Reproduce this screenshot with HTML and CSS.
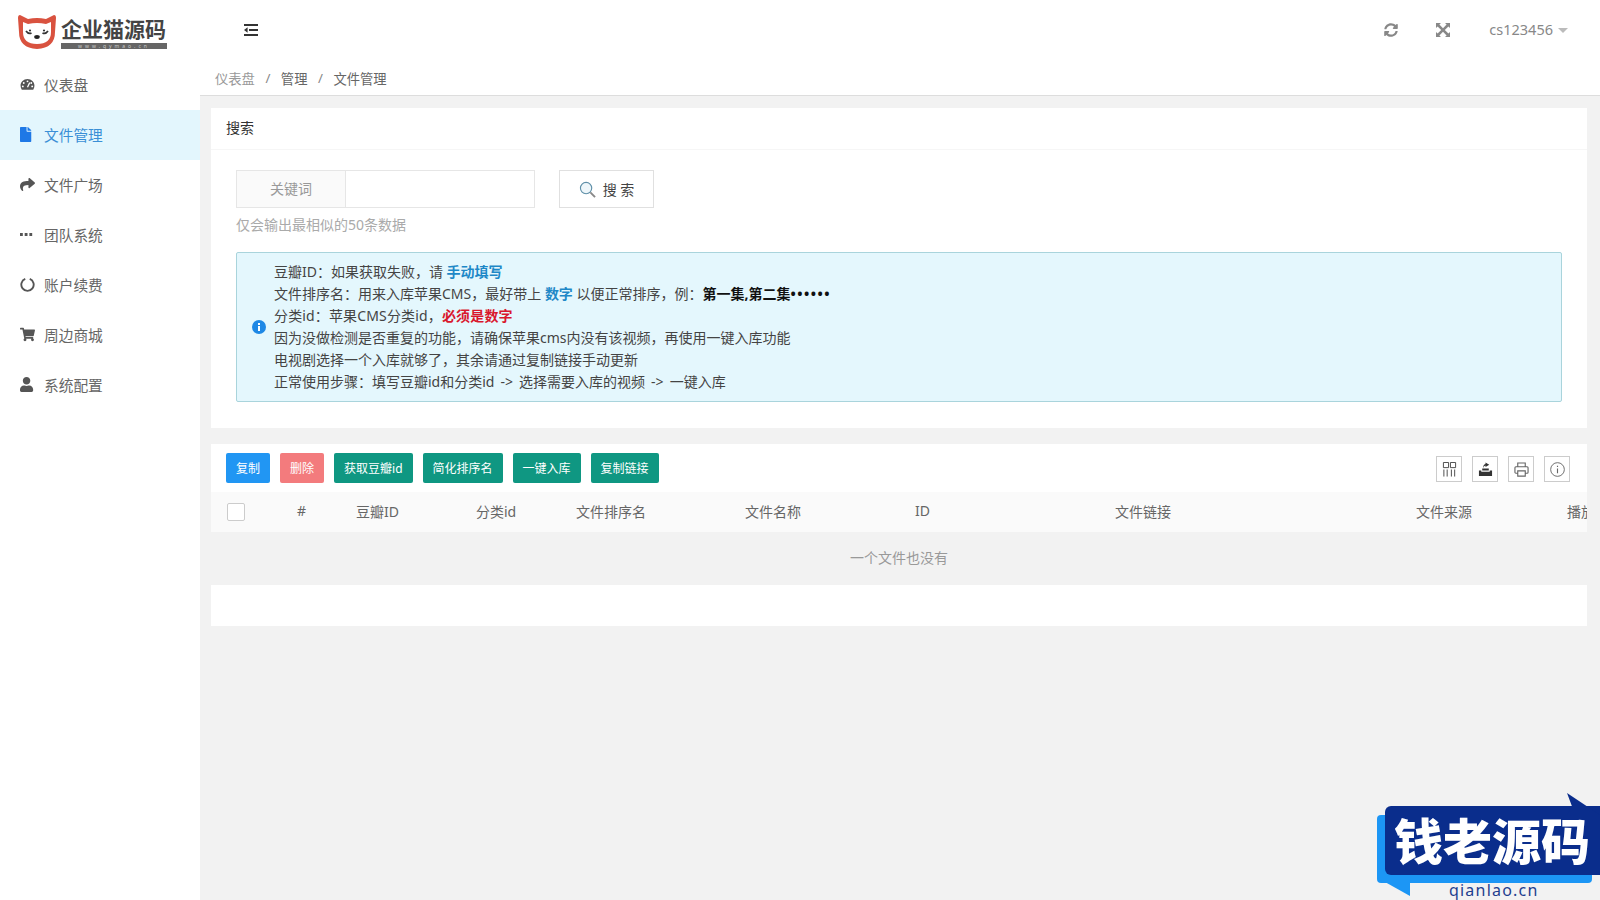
FILE: index.html
```html
<!DOCTYPE html>
<html lang="zh-CN">
<head>
    <meta charset="UTF-8">
    <title>文件管理</title>
    <link rel="stylesheet" href="styles.css">
</head>
<body>
<div class="side">
    <div class="logo">
        <svg class="logo-cat" viewBox="0 0 38 34">
            <path fill="#d9523f" d="M2 0 L10 4 Q19 2 28 4 L36 0 Q38 0 38 3 L37 17 Q37 33 19 34 Q1 33 1 17 L0 3 Q0 0 2 0Z"/>
            <path fill="#fff" d="M5 7 L10 9 Q19 7 28 9 L33 7 L33 17 Q33 29 19 29 Q5 29 5 17Z"/>
            <path fill="none" stroke="#333" stroke-width="1.7" d="M8 16 q2.5 3.5 5.5 2 M24.5 18 q3 1.5 5.5 -2"/>
            <circle cx="12" cy="15.5" r="1.1" fill="#333"/>
            <circle cx="26" cy="15.5" r="1.1" fill="#333"/>
            <ellipse cx="19" cy="22" rx="2.8" ry="1.9" fill="#222"/>
        </svg>
        <div class="logo-text">
            <div class="logo-name">企业猫源码</div>
            <div class="logo-sub">www.qymao.cn</div>
        </div>
    </div>
    <div class="menu">
        <div class="menu-item">
            <svg class="ico" viewBox="0 0 16 16"><path fill="#555" d="M8 2.2C3.8 2.2.6 5.4.6 9.3c0 1.6.5 3 1.3 4.2h12.2c.8-1.2 1.3-2.6 1.3-4.2 0-3.9-3.2-7.1-7.4-7.1z"/><circle cx="8" cy="4.6" r="1" fill="#fff"/><circle cx="4" cy="6.4" r="1" fill="#fff"/><circle cx="12" cy="6.4" r="1" fill="#fff"/><circle cx="3" cy="10" r="1" fill="#fff"/><circle cx="13" cy="10" r="1" fill="#fff"/><path stroke="#fff" stroke-width="1.4" d="M8 11 L10.4 6"/></svg>
            <span>仪表盘</span>
        </div>
        <div class="menu-item menu-active">
            <svg class="ico" viewBox="0 0 384 512" preserveAspectRatio="xMinYMid"><path fill="#1e78e6" d="M224 136V0H24C10.7 0 0 10.7 0 24v464c0 13.3 10.7 24 24 24h336c13.3 0 24-10.7 24-24V160H248c-13.2 0-24-10.8-24-24zm160-14.1v6.1H256V0h6.1c6.4 0 12.5 2.5 17 7l97.9 98c4.5 4.5 7 10.6 7 16.9z"/></svg>
            <span>文件管理</span>
        </div>
        <div class="menu-item">
            <svg class="ico" viewBox="0 0 512 512"><path fill="#555" d="M503.691 189.836L327.687 37.851C312.281 24.546 288 35.347 288 56.015v80.053C127.371 137.907 0 170.1 0 322.326c0 61.441 39.581 122.309 83.333 154.132 13.653 9.931 33.111-2.533 28.077-18.631C66.066 312.814 132.917 274.316 288 272.085V360c0 20.7 24.3 31.453 39.687 18.164l176.004-152c11.071-9.562 11.086-26.753 0-36.328z"/></svg>
            <span>文件广场</span>
        </div>
        <div class="menu-item">
            <svg class="ico" viewBox="0 0 16 16"><path fill="#555" d="M0 6.5h3v3H0zM5 6.5h3v3H5zM10 6.5h3v3h-3z"/></svg>
            <span>团队系统</span>
        </div>
        <div class="menu-item">
            <svg class="ico" viewBox="0 0 16 16"><path fill="none" stroke="#555" stroke-width="2" d="M5.6 2a6.6 6.6 0 1 0 4.8 0"/></svg>
            <span>账户续费</span>
        </div>
        <div class="menu-item">
            <svg class="ico" viewBox="0 0 576 512" preserveAspectRatio="xMinYMid"><path fill="#555" d="M528.12 301.319l47.273-208C578.806 78.301 567.391 64 551.99 64H159.208l-9.166-44.81C147.758 8.021 137.93 0 126.529 0H24C10.745 0 0 10.745 0 24v16c0 13.255 10.745 24 24 24h69.883l70.248 343.435C147.325 417.1 136 435.222 136 456c0 30.928 25.072 56 56 56s56-25.072 56-56c0-15.674-6.447-29.835-16.824-40h209.647C430.447 426.165 424 440.326 424 456c0 30.928 25.072 56 56 56s56-25.072 56-56c0-22.172-12.888-41.332-31.579-50.405l5.517-24.276c3.413-15.018-8.002-29.319-23.403-29.319H218.117l-6.545-32h293.145c11.206 0 20.92-7.754 23.403-18.681z"/></svg>
            <span>周边商城</span>
        </div>
        <div class="menu-item">
            <svg class="ico" viewBox="0 0 448 512" preserveAspectRatio="xMinYMid"><path fill="#555" d="M224 256c70.7 0 128-57.3 128-128S294.7 0 224 0 96 57.3 96 128s57.3 128 128 128zm89.6 32h-16.7c-22.2 10.2-46.9 16-72.9 16s-50.6-5.8-72.9-16h-16.7C60.2 288 0 348.2 0 422.4V464c0 26.5 21.5 48 48 48h352c26.5 0 48-21.5 48-48v-41.6c0-74.2-60.2-134.4-134.4-134.4z"/></svg>
            <span>系统配置</span>
        </div>
    </div>
</div>

<div class="main">
    <div class="top">
        <svg class="toggle" viewBox="0 0 14 12"><path fill="#333" d="M0 0h14v2H0zM5 5h9v2H5zM0 10h14v2H0zM3.6 3.2v5.6L0 6z"/></svg>
        <div class="top-right">
            <svg class="top-ico" viewBox="0 0 512 512"><path fill="#888" d="M370.72 133.28C339.458 104.008 298.888 87.962 255.848 88c-77.458.068-144.328 53.178-162.791 126.85-1.344 5.363-6.122 9.15-11.651 9.15H24.103c-7.498 0-13.194-6.807-11.807-14.176C33.933 94.924 134.813 8 256 8c66.448 0 126.791 26.136 171.315 68.685L463.03 40.97C478.149 25.851 504 36.559 504 57.941V192c0 13.255-10.745 24-24 24H345.941c-21.382 0-32.09-25.851-16.971-40.971l41.75-41.749zM32 296h134.059c21.382 0 32.09 25.851 16.971 40.971l-41.75 41.75c31.262 29.273 71.835 45.319 114.876 45.28 77.418-.07 144.315-53.144 162.787-126.849 1.344-5.363 6.122-9.15 11.651-9.15h57.304c7.498 0 13.194 6.807 11.807 14.176C478.067 417.076 377.187 504 256 504c-66.448 0-126.791-26.136-171.315-68.685L48.97 471.03C33.851 486.149 8 475.441 8 454.059V320c0-13.255 10.745-24 24-24z"/></svg>
            <svg class="top-ico" viewBox="0 0 14 14"><path fill="#888" d="M0 0h5L3.4 1.6 7 5.2 10.6 1.6 9 0h5v5l-1.6-1.6L8.8 7l3.6 3.6L14 9v5H9l1.6-1.6L7 8.8l-3.6 3.6L5 14H0V9l1.6 1.6L5.2 7 1.6 3.4 0 5z"/></svg>
            <div class="user">cs123456<i class="caret"></i></div>
        </div>
    </div>
    <div class="crumb">
        <span class="crumb-first">仪表盘</span><i>/</i><span>管理</span><i>/</i><span>文件管理</span>
    </div>

    <div class="content">
        <div class="card">
            <div class="card-head">搜索</div>
            <div class="card-body">
                <div class="search-row">
                    <div class="input-group">
                        <div class="input-label">关键词</div>
                        <div class="input-box"></div>
                    </div>
                    <div class="search-btn">
                        <svg viewBox="0 0 18 18"><circle cx="7.5" cy="7.5" r="6" fill="#eef6fa" stroke="#5e8fa8" stroke-width="1.2"/><path stroke="#888" stroke-width="2" d="M12 12l5 5"/></svg>
                        <span>搜 索</span>
                    </div>
                </div>
                <div class="hint">仅会输出最相似的50条数据</div>
                <div class="alert">
                    <svg class="alert-ico" viewBox="0 0 14 14"><circle cx="7" cy="7" r="7" fill="#1e88e5"/><path fill="#fff" d="M6 3h2v2H6zM6 6h2v5H6z"/></svg>
                    <div class="alert-text">
                        <p>豆瓣ID：如果获取失败，请 <b class="blue">手动填写</b></p>
                        <p>文件排序名：用来入库苹果CMS，最好带上 <b class="blue">数字</b> 以便正常排序，例：<b class="black">第一集,第二集<span class="dots">••••••</span></b></p>
                        <p class="wide">分类id：苹果CMS分类id，<b class="red">必须是数字</b></p>
                        <p>因为没做检测是否重复的功能，请确保苹果cms内没有该视频，再使用一键入库功能</p>
                        <p>电视剧选择一个入库就够了，其余请通过复制链接手动更新</p>
                        <p class="steps">正常使用步骤：填写豆瓣id和分类id -&gt; 选择需要入库的视频 -&gt; 一键入库</p>
                    </div>
                </div>
            </div>
        </div>

        <div class="table-card">
            <div class="toolbar">
                <div class="btn btn-blue">复制</div>
                <div class="btn btn-red">删除</div>
                <div class="btn btn-green">获取豆瓣id</div>
                <div class="btn btn-green">简化排序名</div>
                <div class="btn btn-green">一键入库</div>
                <div class="btn btn-green">复制链接</div>
                <div class="tools">
                    <div class="tool"><svg viewBox="0 0 16 16"><path fill="none" stroke="#444" d="M1.5 .5h5.5v5.5H1.5zM9 .5h5.5v5.5H9zM2 8v7.5M5.5 8v7.5M10 8v7.5M13.5 8v7.5"/></svg></div>
                    <div class="tool"><svg viewBox="0 0 16 16"><path fill="#333" d="M1 9h2.5v1.5h9V9H15v6H1zM4.5 7h7v2h-7z"/><path fill="#333" d="M8 .5l4 2.4L8 5.3V3.8Q6.2 4 5.8 6.5 5.2 2.6 8 2z"/></svg></div>
                    <div class="tool"><svg viewBox="0 0 16 16"><path fill="none" stroke="#666" stroke-width="1.2" d="M4 5V1h8v4M4 12H2a1 1 0 0 1-1-1V6a1 1 0 0 1 1-1h12a1 1 0 0 1 1 1v5a1 1 0 0 1-1 1h-2M4 9.5h8V15H4z"/></svg></div>
                    <div class="tool"><svg viewBox="0 0 16 16"><circle cx="8" cy="8" r="7.3" fill="none" stroke="#666"/><path fill="#666" d="M7.4 4h1.2v1.4H7.4zM7.4 6.8h1.2V12H7.4z"/></svg></div>
                </div>
            </div>
            <div class="thead">
                <div class="th-check"><i class="checkbox"></i></div>
                <div class="th">#</div>
                <div class="th">豆瓣ID</div>
                <div class="th">分类id</div>
                <div class="th">文件排序名</div>
                <div class="th">文件名称</div>
                <div class="th">ID</div>
                <div class="th">文件链接</div>
                <div class="th">文件来源</div>
                <div class="th">播放</div>
            </div>
            <div class="empty">一个文件也没有</div>
            <div class="table-foot"></div>
        </div>
    </div>
</div>

<div class="mark">
    <div class="mark-back"></div>
    <div class="mark-tail"></div>
    <div class="mark-front">钱老源码</div>
    <div class="mark-flag"></div>
    <div class="mark-url">qianlao.cn</div>
</div>
</body>
</html>
```

FILE: styles.css
```css
*{margin: 0; padding: 0; box-sizing: border-box}
html, body {
    width: 100%;
    height: 100%;
    overflow: hidden;
    background: #f2f2f2;
}
body {
    display: flex;
    font-family: "Noto Sans", "Noto Sans CJK SC", sans-serif;
    font-size: 14px;
    color: #666;
}
/* Sidebar */
.side {
    width: 200px;
    flex: none;
    background: white;
}
.logo {
    height: 60px;
    padding: 15px 0 0 18px;
    display: flex;
}
.logo-cat {
    width: 38px;
    height: 34px;
    flex: none;
}
.logo-text {
    margin-left: 5px;
    width: 106px;
}
.logo-name {
    font-size: 21px;
    line-height: 27px;
    height: 28px;
    font-weight: bold;
    color: #444;
    white-space: nowrap;
    font-family: "Noto Sans CJK SC", sans-serif;
}
.logo-sub {
    height: 6px;
    line-height: 6px;
    font-size: 5px;
    letter-spacing: 3px;
    text-align: center;
    color: #ccc;
    background: #666;
    overflow: hidden;
}
.menu-item {
    height: 50px;
    padding: 0 0 2px 20px;
    display: flex;
    align-items: center;
    font-size: 14.7px;
}
.ico {
    width: 15px;
    height: 15px;
    margin-right: 9px;
    flex: none;
}
.menu-active {
    background: #e3f6fd;
    color: #3a8fd6;
}
/* Header */
.main {
    flex: 1;
    min-width: 0;
    display: flex;
    flex-direction: column;
}
.top {
    height: 60px;
    padding: 0 32px 0 44px;
    background: white;
    display: flex;
    align-items: center;
    justify-content: space-between;
}
.toggle {
    width: 14px;
    height: 12px;
}
.top-right {
    display: flex;
    align-items: center;
}
.top-ico {
    width: 14px;
    height: 14px;
    margin-right: 38px;
}
.top-ico + .top-ico {
    margin-right: 39px;
}
.user {
    padding-bottom: 2px;
    font-size: 14.5px;
    color: #888;
    display: flex;
    align-items: center;
}
.caret {
    margin: 2px 0 0 5px;
    border-left: 5px solid transparent;
    border-right: 5px solid transparent;
    border-top: 5px solid #bbb;
}
.crumb {
    height: 36px;
    padding: 1px 0 0 15px;
    font-size: 13.3px;
    background: white;
    border-bottom: 1px solid #ddd;
    display: flex;
    align-items: center;
}
.crumb i {
    margin: 0 10.5px;
    font-style: normal;
    color: #888;
}
.crumb-first {
    color: #999;
}
/* Content */
.content {
    padding: 12px 13px 0 11px;
}
.card {
    background: white;
    height: 320px;
}
.card-head {
    height: 42px;
    line-height: 40px;
    padding-left: 15px;
    color: #333;
    border-bottom: 1px solid #f6f6f6;
}
.card-body {
    padding: 20px 25px 0 25px;
}
.search-row {
    display: flex;
}
.input-group {
    width: 299px;
    height: 38px;
    border: 1px solid #e6e6e6;
    display: flex;
}
.input-label {
    width: 109px;
    background: #fafafa;
    border-right: 1px solid #e6e6e6;
    line-height: 36px;
    text-align: center;
    color: #999;
}
.search-btn {
    width: 95px;
    height: 38px;
    margin-left: 24px;
    border: 1px solid #e0e0e0;
    display: flex;
    align-items: center;
    justify-content: center;
    color: #444;
}
.search-btn svg {
    width: 17px;
    height: 17px;
    margin-right: 7px;
}
.hint {
    margin-top: 7px;
    line-height: 20px;
    color: #aaa;
}
.alert {
    height: 150px;
    margin-top: 17px;
    padding-left: 15px;
    background: #e4f7fd;
    border: 1px solid #a9d4dc;
    border-radius: 2px;
    display: flex;
    align-items: center;
}
.alert-ico {
    width: 14px;
    height: 14px;
    margin-right: 8px;
    flex: none;
}
.alert-text p {
    line-height: 22px;
    color: #444;
    white-space: nowrap;
}
.alert-text b {
    font-weight: bold;
}
.alert-text .wide {
    letter-spacing: 0.15px;
}
.alert-text .steps {
    word-spacing: 2.4px;
}
.dots {
    letter-spacing: 1.5px;
}
.blue {
    color: #1e88c7;
}
.black {
    color: #111;
}
.red {
    color: #d9182d;
}
/* Table */
.table-card {
    margin-top: 16px;
    overflow: hidden;
}
.toolbar {
    height: 48px;
    padding: 9px 17px 0 15px;
    background: white;
    display: flex;
    align-items: flex-start;
}
.btn {
    height: 30px;
    padding: 0 10px;
    margin-right: 10px;
    line-height: 31px;
    font-size: 12px;
    color: white;
    border-radius: 2px;
    white-space: nowrap;
}
.btn-blue {
    background: #2196f3;
}
.btn-red {
    background: #f37b7d;
}
.btn-green {
    background: #0f9782;
}
.tools {
    margin-left: auto;
    display: flex;
}
.tool {
    width: 26px;
    height: 26px;
    margin-top: 3px;
    margin-left: 10px;
    border: 1px solid #ccc;
    display: flex;
    align-items: center;
    justify-content: center;
}
.tool svg {
    width: 15px;
    height: 15px;
}
.thead {
    height: 40px;
    padding-bottom: 3px;
    background: #fafafa;
    display: grid;
    grid-template-columns: 86px 59px 120px 100px 169px 170px 200px 301px 151px 60px;
    align-items: center;
    white-space: nowrap;
}
.th-check {
    padding: 3px 0 0 16px;
    display: flex;
}
.checkbox {
    width: 18px;
    height: 18px;
    background: white;
    border: 1px solid #ccc;
    border-radius: 2px;
}
.empty {
    height: 53px;
    line-height: 51px;
    text-align: center;
    color: #999;
}
.table-foot {
    height: 41px;
    background: white;
}
/* Watermark over the corner */
.mark {
    position: absolute;
    right: 0;
    bottom: 0;
    width: 223px;
    height: 107px;
}
.mark-back {
    position: absolute;
    left: 0;
    top: 22px;
    width: 215px;
    height: 68px;
    background: #1c96f5;
    border-radius: 4px;
}
.mark-tail {
    position: absolute;
    left: 8px;
    top: 89px;
    border-left: 25px solid transparent;
    border-top: 14px solid #1c96f5;
}
.mark-front {
    position: absolute;
    left: 8px;
    top: 13px;
    width: 215px;
    height: 69px;
    padding-left: 9px;
    background: #0a2d8c;
    border-radius: 6px 0 0 6px;
    font-family: "Noto Sans CJK SC", sans-serif;
    font-size: 49px;
    line-height: 66px;
    font-weight: 900;
    color: white;
    white-space: nowrap;
}
.mark-flag {
    position: absolute;
    right: 0;
    top: 0;
    width: 33px;
    height: 22px;
    background: #0a2d8c;
    clip-path: polygon(0 0, 100% 100%, 0 100%, 15% 60%);
}
.mark-url {
    position: absolute;
    left: 72px;
    top: 87px;
    line-height: 20px;
    font-size: 16px;
    letter-spacing: 1.2px;
    color: #1f3f8f;
    font-family: "Noto Sans", sans-serif;
}
```
